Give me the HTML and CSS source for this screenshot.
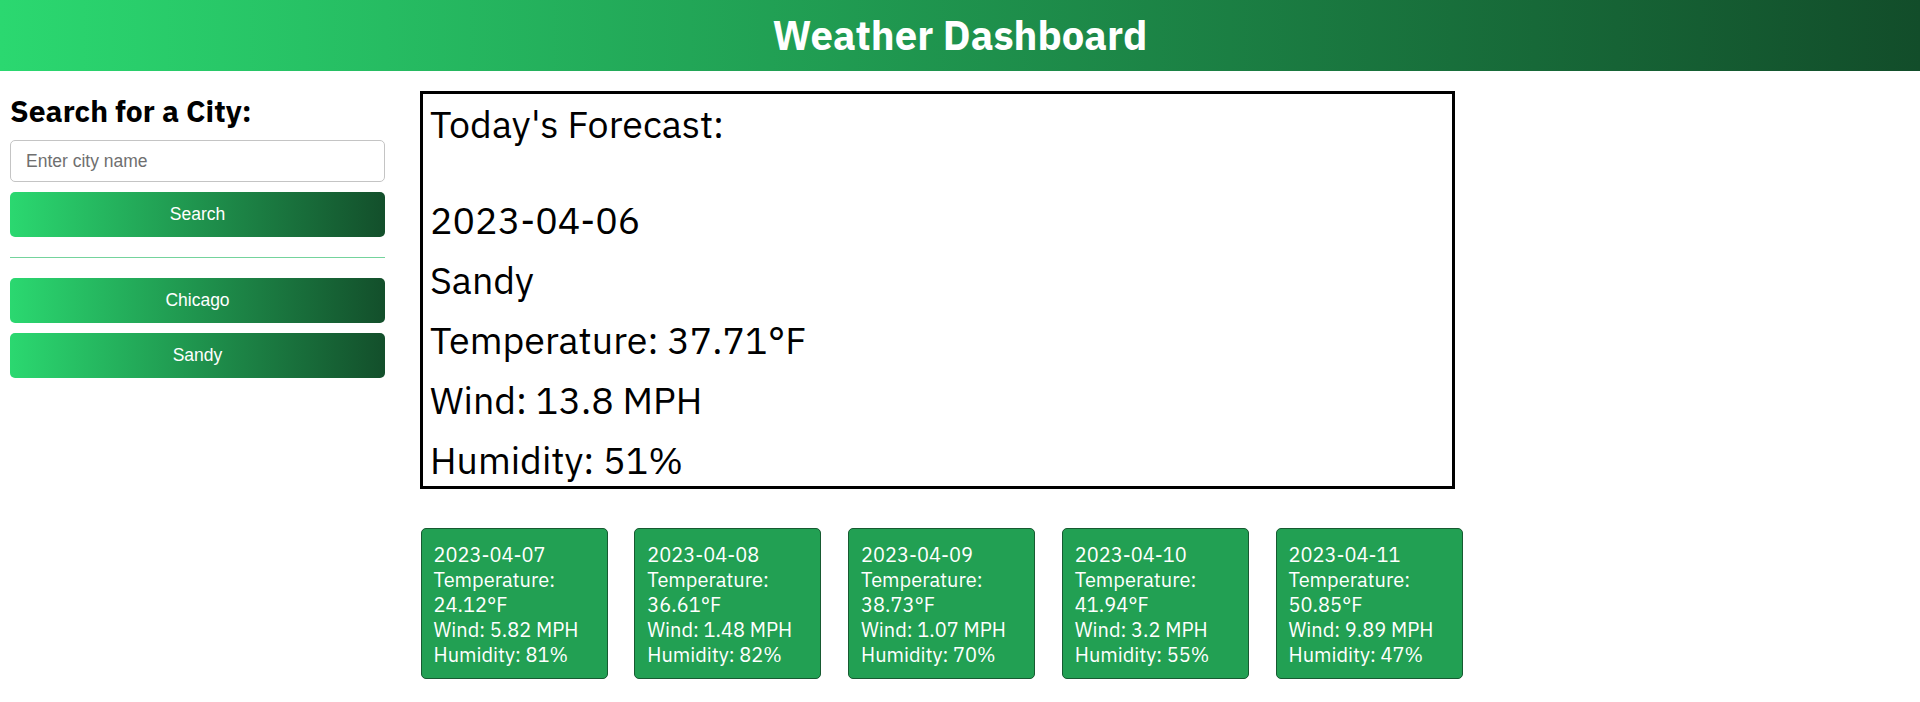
FILE: index.html
```html
<!DOCTYPE html>
<html lang="en">
<head>
<meta charset="utf-8">
<title>Weather Dashboard</title>
<link rel="stylesheet" href="styles.css">
</head>
<body>
<header class="site-header">
  <h1 class="site-title">Weather Dashboard</h1>
</header>
<div class="page">
  <aside class="sidebar">
    <h3 class="sidebar-title">Search for a City:</h3>
    <input class="city-input" type="text" placeholder="Enter city name">
    <button class="btn" type="button">Search</button>
    <hr class="divider">
    <div class="history">
      <button class="btn" type="button">Chicago</button>
      <button class="btn" type="button">Sandy</button>
    </div>
  </aside>
  <main class="content">
    <section class="today">
      <h2 class="today-title">Today's Forecast:</h2>
      <p class="today-line">2023-04-06</p>
      <p class="today-line">Sandy</p>
      <p class="today-line">Temperature: 37.71°F</p>
      <p class="today-line">Wind: 13.8 MPH</p>
      <p class="today-line">Humidity: 51%</p>
    </section>
    <div class="forecast">
      <div class="card">
        <p class="card-line">2023-04-07</p>
        <p class="card-line">Temperature: 24.12°F</p>
        <p class="card-line">Wind: 5.82 MPH</p>
        <p class="card-line">Humidity: 81%</p>
      </div>
      <div class="card">
        <p class="card-line">2023-04-08</p>
        <p class="card-line">Temperature: 36.61°F</p>
        <p class="card-line">Wind: 1.48 MPH</p>
        <p class="card-line">Humidity: 82%</p>
      </div>
      <div class="card">
        <p class="card-line">2023-04-09</p>
        <p class="card-line">Temperature: 38.73°F</p>
        <p class="card-line">Wind: 1.07 MPH</p>
        <p class="card-line">Humidity: 70%</p>
      </div>
      <div class="card">
        <p class="card-line">2023-04-10</p>
        <p class="card-line">Temperature: 41.94°F</p>
        <p class="card-line">Wind: 3.2 MPH</p>
        <p class="card-line">Humidity: 55%</p>
      </div>
      <div class="card">
        <p class="card-line">2023-04-11</p>
        <p class="card-line">Temperature: 50.85°F</p>
        <p class="card-line">Wind: 9.89 MPH</p>
        <p class="card-line">Humidity: 47%</p>
      </div>
    </div>
  </main>
</div>
</body>
</html>
```
FILE: styles.css
```css
* {
  box-sizing: border-box;
}

body {
  margin: 0;
  background: #ffffff;
  color: #000000;
  font-family: "IBM Plex Sans", Inter, "Noto Sans", sans-serif;
}

.site-header {
  height: 71px;
  background: linear-gradient(to right, #2bd870, #124d2a);
  text-align: center;
}

.site-title {
  margin: 0;
  font-size: 40px;
  line-height: 71px;
  font-weight: 700;
  color: #ffffff;
}

.page {
  display: flex;
  align-items: flex-start;
  gap: 35px;
  padding: 20px 0 0 10px;
}

.sidebar {
  width: 375px;
  flex: none;
}

.sidebar-title {
  margin: 1.5px 0 11.5px;
  font-size: 30px;
  line-height: 36px;
  font-weight: 700;
}

.city-input {
  display: block;
  width: 100%;
  height: 42px;
  margin: 0 0 10px;
  padding: 0 15px;
  border: 1px solid #c4c4c4;
  border-radius: 5px;
  font-family: "Liberation Sans", Arial, sans-serif;
  font-size: 17.5px;
  color: #222;
}

.city-input::placeholder {
  color: #6f6f6f;
}

.btn {
  display: block;
  width: 100%;
  height: 45px;
  padding: 0;
  border: 0;
  border-radius: 5px;
  background: linear-gradient(to right, #2bd870, #134f2b);
  color: #ffffff;
  font-family: "Liberation Sans", Arial, sans-serif;
  font-size: 17.5px;
}

.divider {
  height: 0;
  margin: 20px 0;
  border: 0;
  border-top: 1px solid #74d39c;
}

.history {
  display: flex;
  flex-direction: column;
  gap: 10px;
}

.content {
  width: 1035px;
  flex: none;
}

.today {
  height: 398px;
  padding: 0 0 0 7px;
  border: 3px solid #000000;
}

.today-title,
.today-line {
  margin: 0;
  font-size: 37.6px;
  line-height: 60px;
  font-weight: 400;
}

.today-title {
  margin-bottom: 36px;
}

.forecast {
  display: flex;
  gap: 26.75px;
  margin-top: 39px;
  padding-left: 0.5px;
}

.card {
  width: 187px;
  flex: none;
  padding: 13px 12px 11px;
  background: #22a053;
  border: 1px solid #175a31;
  border-radius: 5px;
  color: #ffffff;
}

.card-line {
  margin: 0;
  font-size: 20px;
  line-height: 25px;
}
```
